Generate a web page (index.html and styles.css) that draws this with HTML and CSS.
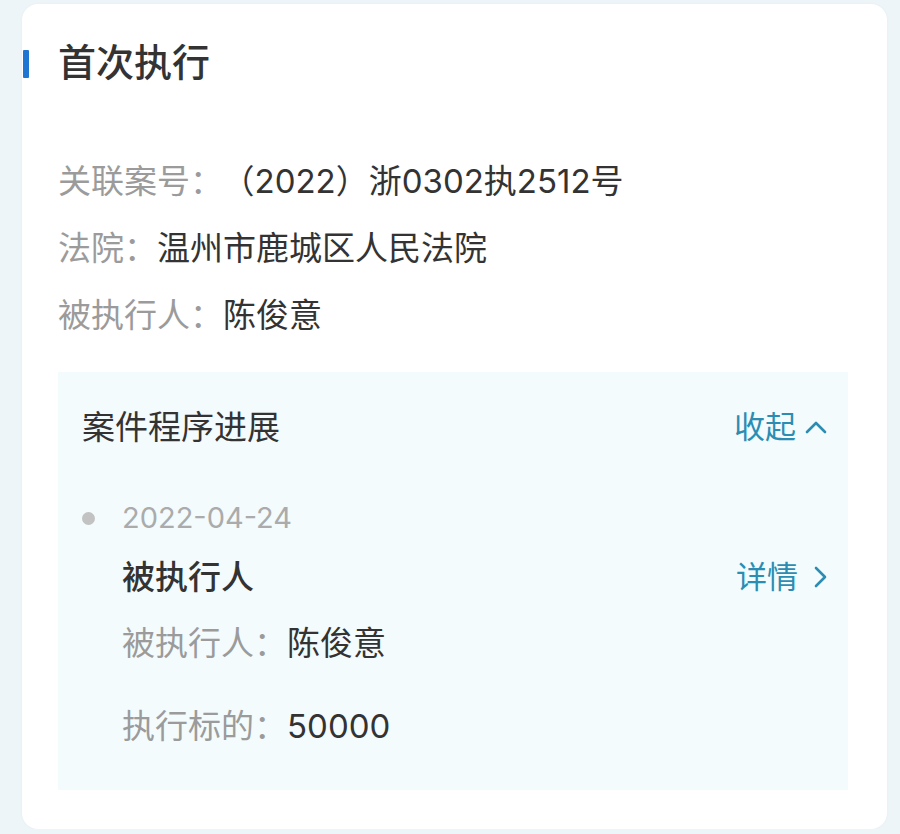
FILE: index.html
```html
<!DOCTYPE html>
<html lang="zh-CN">
<head>
    <meta charset="UTF-8">
    <meta name="viewport" content="width=device-width, initial-scale=1.0">
    <title>首次执行</title>
    <link rel="stylesheet" href="styles.css">
</head>
<body>
    <div class="card">
        <h1 class="card-title">首次执行</h1>

        <div class="info">
            <div class="row"><span class="label">关联案号：</span><span class="value case-no">（2022）浙0302执2512号</span></div>
            <div class="row"><span class="label">法院：</span><span class="value">温州市鹿城区人民法院</span></div>
            <div class="row"><span class="label">被执行人：</span><span class="value">陈俊意</span></div>
        </div>

        <div class="progress">
            <div class="progress-head">
                <span class="progress-title">案件程序进展</span>
                <a class="link">收起
                    <svg width="24" height="16" viewBox="0 0 24 16"><path d="M3 13 L12 4 L21 13" fill="none" stroke="currentColor" stroke-width="2.6" stroke-linecap="round" stroke-linejoin="round"/></svg>
                </a>
            </div>

            <div class="event">
                <div class="event-date"><span class="dot"></span>2022-04-24</div>
                <div class="event-head">
                    <span class="event-title">被执行人</span>
                    <a class="link detail">详情
                        <svg width="16" height="24" viewBox="0 0 16 24"><path d="M4 3 L13 12 L4 21" fill="none" stroke="currentColor" stroke-width="2.6" stroke-linecap="round" stroke-linejoin="round"/></svg>
                    </a>
                </div>
                <div class="event-row first"><span class="label">被执行人：</span><span class="value">陈俊意</span></div>
                <div class="event-row"><span class="label">执行标的：</span><span class="value">50000</span></div>
            </div>
        </div>
    </div>
</body>
</html>
```

FILE: styles.css
```css
body {
    margin: 0;
    background-color: #edf5f8;
    font-family: Inter, "Noto Sans CJK SC", sans-serif;
    color: #333;
}
.card {
    margin: 4px 13px 0 22px;
    height: 825px;
    box-sizing: border-box;
    background-color: #fff;
    border-radius: 16px;
    box-shadow: 0 0 3px rgba(0, 0, 0, 0.04);
    padding: 33px 39px 0 36px;
}
.card-title {
    position: relative;
    margin: 0;
    font-size: 38px;
    font-weight: 500;
    line-height: 50px;
    color: #333;
}
.card-title::before {
    content: "";
    position: absolute;
    left: -35px;
    top: 13px;
    width: 6px;
    height: 28px;
    border-radius: 1px;
    background-color: #1f76d2;
}
.info {
    margin-top: 70px;
    display: flex;
    flex-direction: column;
    gap: 19px;
}
.row, .event-row {
    font-size: 33px;
    line-height: 48px;
}
.label {
    color: #9b9b9b;
}
.value {
    color: #333;
}
.case-no {
    margin-left: 15px;
}
.progress {
    margin-top: 33px;
    height: 418px;
    box-sizing: border-box;
    background-color: #f3fbfd;
    padding: 31px 20px 0 24px;
}
.progress-head, .event-head {
    display: flex;
    justify-content: space-between;
    align-items: center;
    line-height: 48px;
}
.progress-title {
    font-size: 33px;
    color: #333;
}
.link {
    display: flex;
    align-items: center;
    gap: 8px;
    font-size: 31px;
    color: #2c8db3;
}
.link.detail {
    gap: 14px;
}
.event {
    margin-top: 43px;
}
.event-date {
    display: flex;
    align-items: center;
    font-size: 29px;
    line-height: 48px;
    color: #ababab;
}
.dot {
    width: 13px;
    height: 13px;
    border-radius: 50%;
    background-color: #c2c2c2;
    margin-right: 27px;
}
.event-head {
    margin-top: 11px;
    padding-left: 40px;
}
.event-title {
    font-size: 33px;
    font-weight: 500;
    color: #333;
}
.event-row {
    padding-left: 40px;
    margin-top: 35px;
}
.event-row.first {
    margin-top: 18px;
}
```
